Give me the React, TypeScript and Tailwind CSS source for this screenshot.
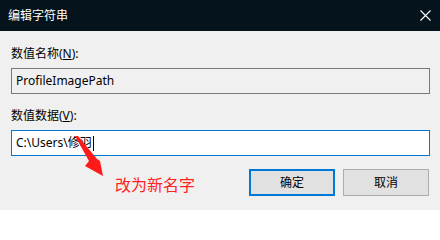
const FONT = "font-['Segoe_UI','Noto_Sans','Noto_Sans_CJK_SC',sans-serif]";

function CloseIcon() {
  return (
    <svg width="11" height="11" viewBox="0 0 11 11" className="block">
      <path d="M0.5 0.5 L10.5 10.5 M10.5 0.5 L0.5 10.5" stroke="#ffffff" strokeWidth="1.1" />
    </svg>
  );
}

// red annotation arrow drawn over the dialog
function RedArrow() {
  return (
    <svg width="40" height="50" viewBox="0 0 40 50" className="absolute left-[70px] top-[130px]">
      <path d="M5 6 L8 6 L27 29 L30 31 L33 46 L15 36 L19 31 Z" fill="#ff1a1a" />
    </svg>
  );
}

export default function App() {
  return (
    <div className={`relative flex h-[210px] w-[440px] flex-col bg-[#f0f0f0] text-[12px] text-black ${FONT}`}>
      <header className="flex h-[31px] items-center justify-between bg-[#05141c] pl-[8px] pr-[9px] text-white">
        <span className="text-[12px] leading-none">编辑字符串</span>
        <CloseIcon />
      </header>

      <div className="flex flex-col px-[11px] pt-[15px]">
        <label className="leading-[16px]">
          数值名称(<span className="underline">N</span>):
        </label>
        <div className="mt-[6px] flex h-[26px] w-[419px] items-center border border-[#7a7a7a] bg-[#f0f0f0] px-[4px]">
          ProfileImagePath
        </div>

        <label className="mt-[14px] leading-[16px]">
          数值数据(<span className="underline">V</span>):
        </label>
        <div className="mt-[6px] flex h-[26px] w-[419px] items-center border border-[#0078d7] bg-white px-[4px]">
          C:\Users\修羽
          <span className="ml-[1px] h-[15px] w-px bg-black" />
        </div>

        <div className="mt-[13px] flex items-center justify-between">
          <span className="ml-[104px] mt-[4px] text-[16px] leading-none text-[#ff2222]">改为新名字</span>
          <div className="flex gap-[8px]">
            <button className="flex h-[27px] w-[86px] items-center justify-center border-2 border-[#0078d7] bg-[#e1e1e1]">
              确定
            </button>
            <button className="flex h-[27px] w-[86px] items-center justify-center border border-[#adadad] bg-[#e1e1e1]">
              取消
            </button>
          </div>
        </div>
      </div>

      <RedArrow />
    </div>
  );
}
